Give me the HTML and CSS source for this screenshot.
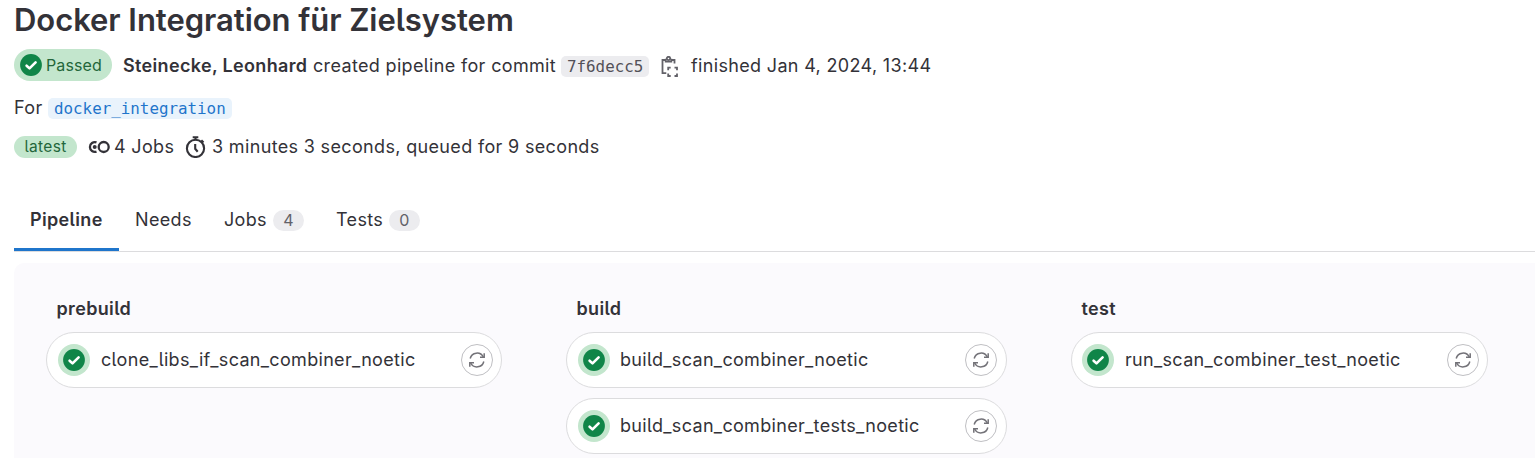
FILE: index.html
```html
<!DOCTYPE html>
<html lang="en">
<head>
<meta charset="utf-8">
<title>Docker Integration für Zielsystem</title>
<link rel="stylesheet" href="styles.css">
</head>
<body>
<svg class="sprite" aria-hidden="true">
  <symbol id="check" viewBox="0 0 22 22"><circle cx="11" cy="11" r="10.9" fill="#108548"/><path d="M6.6 11.7 9.5 14.4 15.6 8.3" fill="none" stroke="#fff" stroke-width="2.6" stroke-linecap="round" stroke-linejoin="round"/></symbol>
  <symbol id="retry" viewBox="0 0 16 16"><g fill="none" stroke="currentColor" stroke-width="1.5"><path d="M1.2 6.5A7 7 0 0 1 14.3 5M14.8 9.5A7 7 0 0 1 1.7 11"/><path d="M15.2 1.2V5.3H11M.8 14.8V10.7H5"/></g></symbol>
</svg>
<main class="page">
  <h1 class="title">Docker Integration für Zielsystem</h1>
  <div class="summary">
    <span class="status"><svg class="status-icon"><use href="#check"/></svg><span class="status-text">Passed</span></span>
    <strong class="author">Steinecke, Leonhard</strong>
    <span class="created">created pipeline for commit</span>
    <code class="code">7f6decc5</code>
    <svg class="clipboard" viewBox="0 0 21 21" fill="none" stroke="currentColor" stroke-width="1.8"><path d="M6.3 17.2H2.5V4H5M12 4H14.5V7.5"/><path d="M5.7 2.8V5.6H11.3V2.8"/><circle cx="8.5" cy="2.5" r="1.7"/><path d="M8.2 14.2V11.7H10.7M14.5 11.7H17V14.2M17 17.5V20H14.5M10.7 20H8.2V17.5"/></svg>
    <span class="finished">finished Jan 4, 2024, 13:44</span>
  </div>
  <div class="ref-row"><span class="for">For</span><code class="code code-link">docker_integration</code></div>
  <div class="meta">
    <span class="badge-latest">latest</span>
    <svg class="jobs-icon" viewBox="0 0 22 22" fill="none" stroke="currentColor" stroke-width="2.3"><path d="M8.5 6.4A4.9 4.9 0 1 0 8.5 15.6"/><circle cx="15.7" cy="11" r="5"/><circle cx="6.7" cy="11" r="2" fill="currentColor" stroke="none"/></svg>
    <span class="jobs-count">4 Jobs</span>
    <svg class="timer-icon" viewBox="0 0 22 22" fill="none" stroke="currentColor" stroke-width="2.1"><circle cx="10.5" cy="12.4" r="8.6"/><path d="M7.7 1.3H13.3M10.5 1.3V4.2M16.3 4.2 18.5 6.4M10.2 8V12.8L12.7 15.7"/></svg>
    <span class="duration">3 minutes 3 seconds, queued for 9 seconds</span>
  </div>
  <nav class="tabs">
    <a class="tab tab-active">Pipeline</a>
    <a class="tab tab-needs">Needs</a>
    <a class="tab tab-jobs">Jobs<span class="count">4</span></a>
    <a class="tab tab-tests">Tests<span class="count">0</span></a>
  </nav>
  <section class="graph">
    <div class="stage stage-prebuild">
      <h2 class="stage-name">prebuild</h2>
      <div class="job"><span class="job-status"><svg class="status-icon"><use href="#check"/></svg></span><span class="job-name">clone_libs_if_scan_combiner_noetic</span><span class="retry"><svg class="retry-icon"><use href="#retry"/></svg></span></div>
    </div>
    <div class="stage stage-build">
      <h2 class="stage-name">build</h2>
      <div class="job"><span class="job-status"><svg class="status-icon"><use href="#check"/></svg></span><span class="job-name">build_scan_combiner_noetic</span><span class="retry"><svg class="retry-icon"><use href="#retry"/></svg></span></div>
      <div class="job"><span class="job-status"><svg class="status-icon"><use href="#check"/></svg></span><span class="job-name">build_scan_combiner_tests_noetic</span><span class="retry"><svg class="retry-icon"><use href="#retry"/></svg></span></div>
    </div>
    <div class="stage stage-test">
      <h2 class="stage-name">test</h2>
      <div class="job"><span class="job-status"><svg class="status-icon"><use href="#check"/></svg></span><span class="job-name">run_scan_combiner_test_noetic</span><span class="retry"><svg class="retry-icon"><use href="#retry"/></svg></span></div>
    </div>
  </section>
</main>
</body>
</html>
```
FILE: styles.css
```css
* { box-sizing: border-box; }
body { margin: 0; background: #fff; color: #333238; font: 18px/28px Inter, sans-serif; font-feature-settings: "cv05"; letter-spacing: 0.34px; white-space: nowrap; }
.sprite { display: none; }
svg { display: block; flex: none; }
.page { display: flex; flex-direction: column; height: 458px; padding-left: 14px; overflow: hidden; }
.title { margin: 0; height: 40px; font-size: 31px; line-height: 40px; font-weight: 600; letter-spacing: -0.05px; }
.summary { display: flex; align-items: center; height: 32px; margin-top: 9px; }
.status { display: flex; align-items: center; width: 98px; height: 32px; padding-left: 6px; gap: 4px; border-radius: 16px; background: #c3e6cd; color: #24663b; }
.status-icon { width: 22px; height: 22px; }
.status-text { font-size: 16px; letter-spacing: 0.1px; }
.author { width: 185px; margin-left: 11px; padding-top: 1px; font-weight: 600; }
.created { width: 243px; margin-left: 5px; padding-top: 1px; }
.code { height: 21px; padding: 0 6px; border-radius: 5px; background: #ececef; color: #535158; font: 15.85px/21px "DejaVu Sans Mono", monospace; letter-spacing: 0; margin-left: 5px; }
.summary .code { width: 88px; margin-top: 2px; }
.clipboard { width: 21px; height: 21px; margin-left: 11px; margin-top: 2px; color: #626168; }
.finished { margin-left: 10px; padding-top: 1px; }
.ref-row { display: flex; align-items: center; height: 28px; margin-top: 13px; }
.for { width: 29px; }
.code-link { background: #e9f3fc; color: #1f75cb; }
.meta { display: flex; align-items: center; height: 28px; margin-top: 11px; }
.badge-latest { width: 63px; height: 22px; border-radius: 11px; background: #c3e6cd; color: #24663b; text-align: center; font-size: 15.5px; line-height: 22px; }
.jobs-icon { width: 22px; height: 22px; margin-left: 11px; }
.jobs-count { width: 60px; margin-left: 4px; }
.timer-icon { width: 22px; height: 22px; margin-left: 11px; }
.duration { margin-left: 5px; }
.tabs { display: flex; height: 63px; margin-top: 28px; border-bottom: 1px solid #dcdcde; }
.tab { display: flex; align-items: center; height: 62px; padding: 0 16px; }
.tab-active { width: 105px; font-weight: 600; box-shadow: inset 0 -3px #1f75cb; }
.tab-needs { width: 89px; }
.tab-jobs { width: 112px; }
.tab-tests { width: 116px; }
.count { width: 31px; height: 21px; margin-left: auto; border-radius: 11px; background: #ececef; color: #626168; text-align: center; font-size: 16px; line-height: 20px; }
.graph { display: flex; flex: 1; align-items: flex-start; gap: 64px; margin-top: 11px; padding: 32px 0 0 32px; border-radius: 10px 0 0 0; background: #fbfafd; }
.stage { display: flex; flex-direction: column; gap: 10px; }
.stage-prebuild { width: 456px; }
.stage-build { width: 441px; }
.stage-test { width: 417px; }
.stage-name { margin: 0; padding-left: 10.5px; font-size: 18px; line-height: 27px; font-weight: 600; }
.job { display: flex; align-items: center; height: 56px; padding: 0 8px 0 11px; border: 1px solid #dcdcde; border-radius: 28px; background: #fff; }
.stage-build .job { padding: 0 9px 0 11px; }
.job-status { display: flex; align-items: center; justify-content: center; width: 32px; height: 32px; border-radius: 50%; background: #c3e6cd; }
.stage-test .job { padding-left: 10px; }
.job-name { flex: 1; margin-left: 11px; letter-spacing: 0.32px; }
.stage-build .job-name { margin-left: 10px; }
.retry { display: flex; align-items: center; justify-content: center; width: 32px; height: 32px; border: 1px solid #bfbfc3; border-radius: 50%; color: #737278; }
.retry-icon { width: 16px; height: 16px; }
```
